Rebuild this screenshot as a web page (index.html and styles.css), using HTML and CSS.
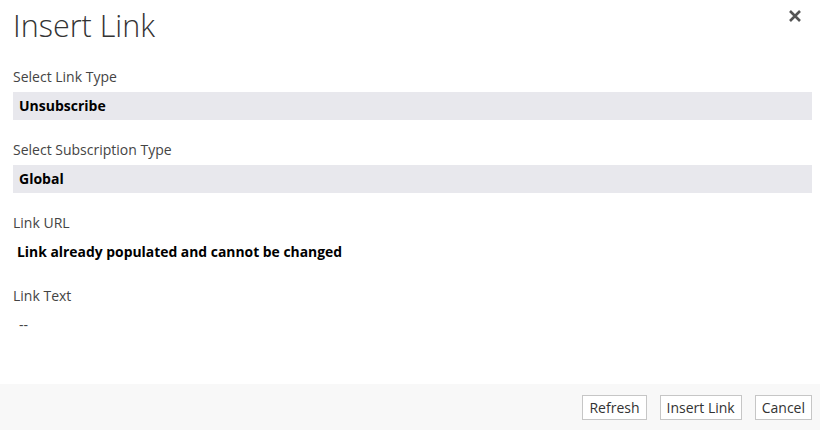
FILE: index.html
```html
<!DOCTYPE html>
<html>
<head>
<meta charset="utf-8">
<link rel="stylesheet" href="styles.css">
</head>
<body>
<div class="dialog">
  <div class="content">
    <div class="header">
      <h1 class="title">Insert Link</h1>
      <button class="close" aria-label="Close">
        <svg width="14" height="14" viewBox="0 0 14 14"><path d="M2 2 L12 12 M12 2 L2 12" stroke="#555" stroke-width="2.6" stroke-linecap="butt"/></svg>
      </button>
    </div>
    <div class="field">
      <div class="label">Select Link Type</div>
      <div class="select">Unsubscribe</div>
    </div>
    <div class="field">
      <div class="label">Select Subscription Type</div>
      <div class="select">Global</div>
    </div>
    <div class="field">
      <div class="label">Link URL</div>
      <div class="value">Link already populated and cannot be changed</div>
    </div>
    <div class="field">
      <div class="label">Link Text</div>
      <div class="dash">--</div>
    </div>
  </div>
  <div class="footer">
    <button class="btn">Refresh</button>
    <button class="btn">Insert Link</button>
    <button class="btn">Cancel</button>
  </div>
</div>
</body>
</html>
```

FILE: styles.css
```css
html, body {
  margin: 0;
  padding: 0;
  background: #fff;
}
body {
  font-family: "Open Sans", "Noto Sans", sans-serif;
  color: #333;
  width: 820px;
  height: 430px;
  overflow: hidden;
}
.dialog {
  display: flex;
  flex-direction: column;
  height: 430px;
}
.content {
  flex: 1;
  padding: 0 8px 0 13px;
}
.header {
  display: flex;
  justify-content: space-between;
  align-items: flex-start;
  height: 58px;
}
.title {
  margin: 5px 0 0 0;
  font-size: 30.5px;
  font-weight: 300;
  line-height: 40px;
  color: #333;
}
.close {
  border: none;
  background: none;
  padding: 0;
  margin: 9px 10px 0 0;
  width: 14px;
  height: 14px;
  display: flex;
}
.field {
  display: flex;
  flex-direction: column;
}
.label {
  font-size: 14px;
  line-height: 20px;
  color: #444;
  height: 34px;
  padding-top: 9px;
  box-sizing: border-box;
}
.select {
  background: #e8e8ed;
  height: 28px;
  line-height: 28px;
  font-size: 14px;
  font-weight: 700;
  color: #000;
  padding-left: 6px;
  width: 799px;
  box-sizing: border-box;
  margin-bottom: 11px;
}
.value {
  font-size: 13.9px;
  font-weight: 700;
  color: #000;
  height: 28px;
  line-height: 28px;
  padding-left: 4px;
  margin-bottom: 11px;
}
.dash {
  font-size: 14px;
  color: #444;
  padding-left: 6px;
  line-height: 28px;
}
.footer {
  background: #f8f8f8;
  height: 46px;
  display: flex;
  justify-content: flex-end;
  align-items: center;
  gap: 13px;
  padding-right: 8px;
}
.btn {
  font-family: inherit;
  font-size: 14px;
  color: #333;
  background: #fff;
  border: 1px solid #c6c6c6;
  height: 25px;
  padding: 0 6px;
  line-height: 21px;
  margin-top: 1px;
}
```
